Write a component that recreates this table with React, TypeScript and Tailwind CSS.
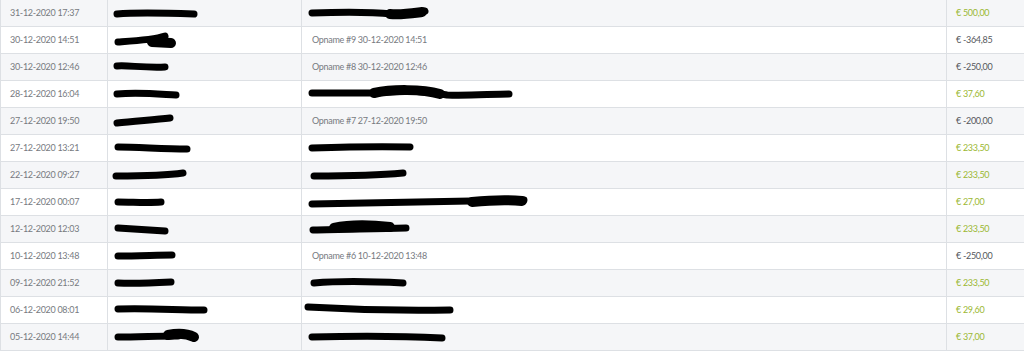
import React from "react";

type Row = {
  date: string;
  name: string[];
  desc?: string;
  descPaths?: string[];
  amount: string;
  plus: boolean;
};

const rows: Row[] = [
  { date: "31-12-2020 17:37", name: ["M9 14 C 30 12, 60 13, 86 14"], descPaths: ["M10 13 C 40 12, 70 12, 90 14 C 100 15, 115 13, 123 11", "M88 14 C 100 15, 112 13, 120 12"], amount: "€ 500,00", plus: true },
  { date: "30-12-2020 14:51", name: ["M10 15 C 25 14, 45 13, 57 9", "M44 15 L 63 16"], desc: "Opname #9 30-12-2020 14:51", amount: "€ -364,85", plus: false },
  { date: "30-12-2020 12:46", name: ["M9 12 C 20 11, 35 14, 57 13"], desc: "Opname #8 30-12-2020 12:46", amount: "€ -250,00", plus: false },
  { date: "28-12-2020 16:04", name: ["M9 13 C 30 11, 50 13, 68 14"], descPaths: ["M10 12 C 40 12, 60 12, 75 12 C 100 9, 125 10, 145 14 C 165 15, 190 13, 207 13", "M72 12 C 90 8, 120 8, 138 13"], amount: "€ 37,60", plus: true },
  { date: "27-12-2020 19:50", name: ["M9 15 C 25 13, 45 12, 62 10"], desc: "Opname #7 27-12-2020 19:50", amount: "€ -200,00", plus: false },
  { date: "27-12-2020 13:21", name: ["M10 12 C 30 12, 55 14, 79 14"], descPaths: ["M10 13 C 40 12, 70 11, 108 12"], amount: "€ 233,50", plus: true },
  { date: "22-12-2020 09:27", name: ["M8 14 C 30 14, 55 14, 75 11"], descPaths: ["M12 14 C 40 14, 70 14, 101 11"], amount: "€ 233,50", plus: true },
  { date: "17-12-2020 00:07", name: ["M10 13 C 25 13, 40 14, 53 13"], descPaths: ["M10 15 C 80 14, 150 13, 222 11", "M170 13 C 190 11, 210 11, 220 12"], amount: "€ 27,00", plus: true },
  { date: "12-12-2020 12:03", name: ["M10 12 C 25 13, 40 14, 57 15"], descPaths: ["M11 14 C 40 13, 70 13, 104 12", "M32 12 C 50 8, 70 9, 88 11"], amount: "€ 233,50", plus: true },
  { date: "10-12-2020 13:48", name: ["M10 13 C 30 13, 50 12, 64 12"], desc: "Opname #6 10-12-2020 13:48", amount: "€ -250,00", plus: false },
  { date: "09-12-2020 21:52", name: ["M10 13 C 25 14, 45 13, 63 12"], descPaths: ["M12 13 C 35 11, 65 11, 101 13"], amount: "€ 233,50", plus: true },
  { date: "06-12-2020 08:01", name: ["M10 12 C 40 11, 70 13, 96 13"], descPaths: ["M6 10 C 40 12, 90 14, 148 13"], amount: "€ 29,60", plus: true },
  { date: "05-12-2020 14:44", name: ["M10 13 C 30 13, 50 12, 70 12", "M60 11 C 70 9, 80 10, 86 13"], descPaths: ["M10 13 C 50 12, 100 12, 140 14"], amount: "€ 37,00", plus: true },
];

function Scribble({ paths, width }: { paths: string[]; width: number }) {
  return (
    <svg width={width} height={26} className="block" viewBox={`0 0 ${width} 26`}>
      {paths.map((d, i) => (
        <path key={i} d={d} fill="none" stroke="#000" strokeWidth={i === 0 ? 7 : 10} strokeLinecap="round" strokeLinejoin="round" />
      ))}
    </svg>
  );
}

export default function App() {
  return (
    <div className="w-[1024px] h-[351px] overflow-hidden bg-white font-['Lato',sans-serif] text-[9px] tracking-[-0.3px] text-[#777a7f]">
      <table className="w-[1024px] border-separate border-spacing-0 table-fixed">
        <colgroup>
          <col className="w-[108px]" />
          <col className="w-[194px]" />
          <col className="w-[645px]" />
          <col className="w-[77px]" />
        </colgroup>
        <tbody>
          {rows.map((r, i) => {
            const bg = i % 2 === 0 ? "bg-[#f5f6f8]" : "bg-white";
            return (
              <tr key={i} className="h-[27px]">
                <td className={`${bg} p-0 pl-[9px] border-l border-r border-b border-[#dde0e4] whitespace-nowrap`}>{r.date}</td>
                <td className={`${bg} p-0 border-r border-b border-[#dde0e4]`}>
                  <Scribble paths={r.name} width={193} />
                </td>
                <td className={`${bg} p-0 border-r border-b border-[#dde0e4] whitespace-nowrap`}>
                  {r.desc ? <span className="pl-[10px]">{r.desc}</span> : <Scribble paths={r.descPaths ?? []} width={644} />}
                </td>
                <td className={`${bg} p-0 pl-[9px] border-b border-[#dde0e4] whitespace-nowrap ${r.plus ? "text-[#9bb833]" : "text-[#55585c]"}`}>{r.amount}</td>
              </tr>
            );
          })}
        </tbody>
      </table>
    </div>
  );
}
